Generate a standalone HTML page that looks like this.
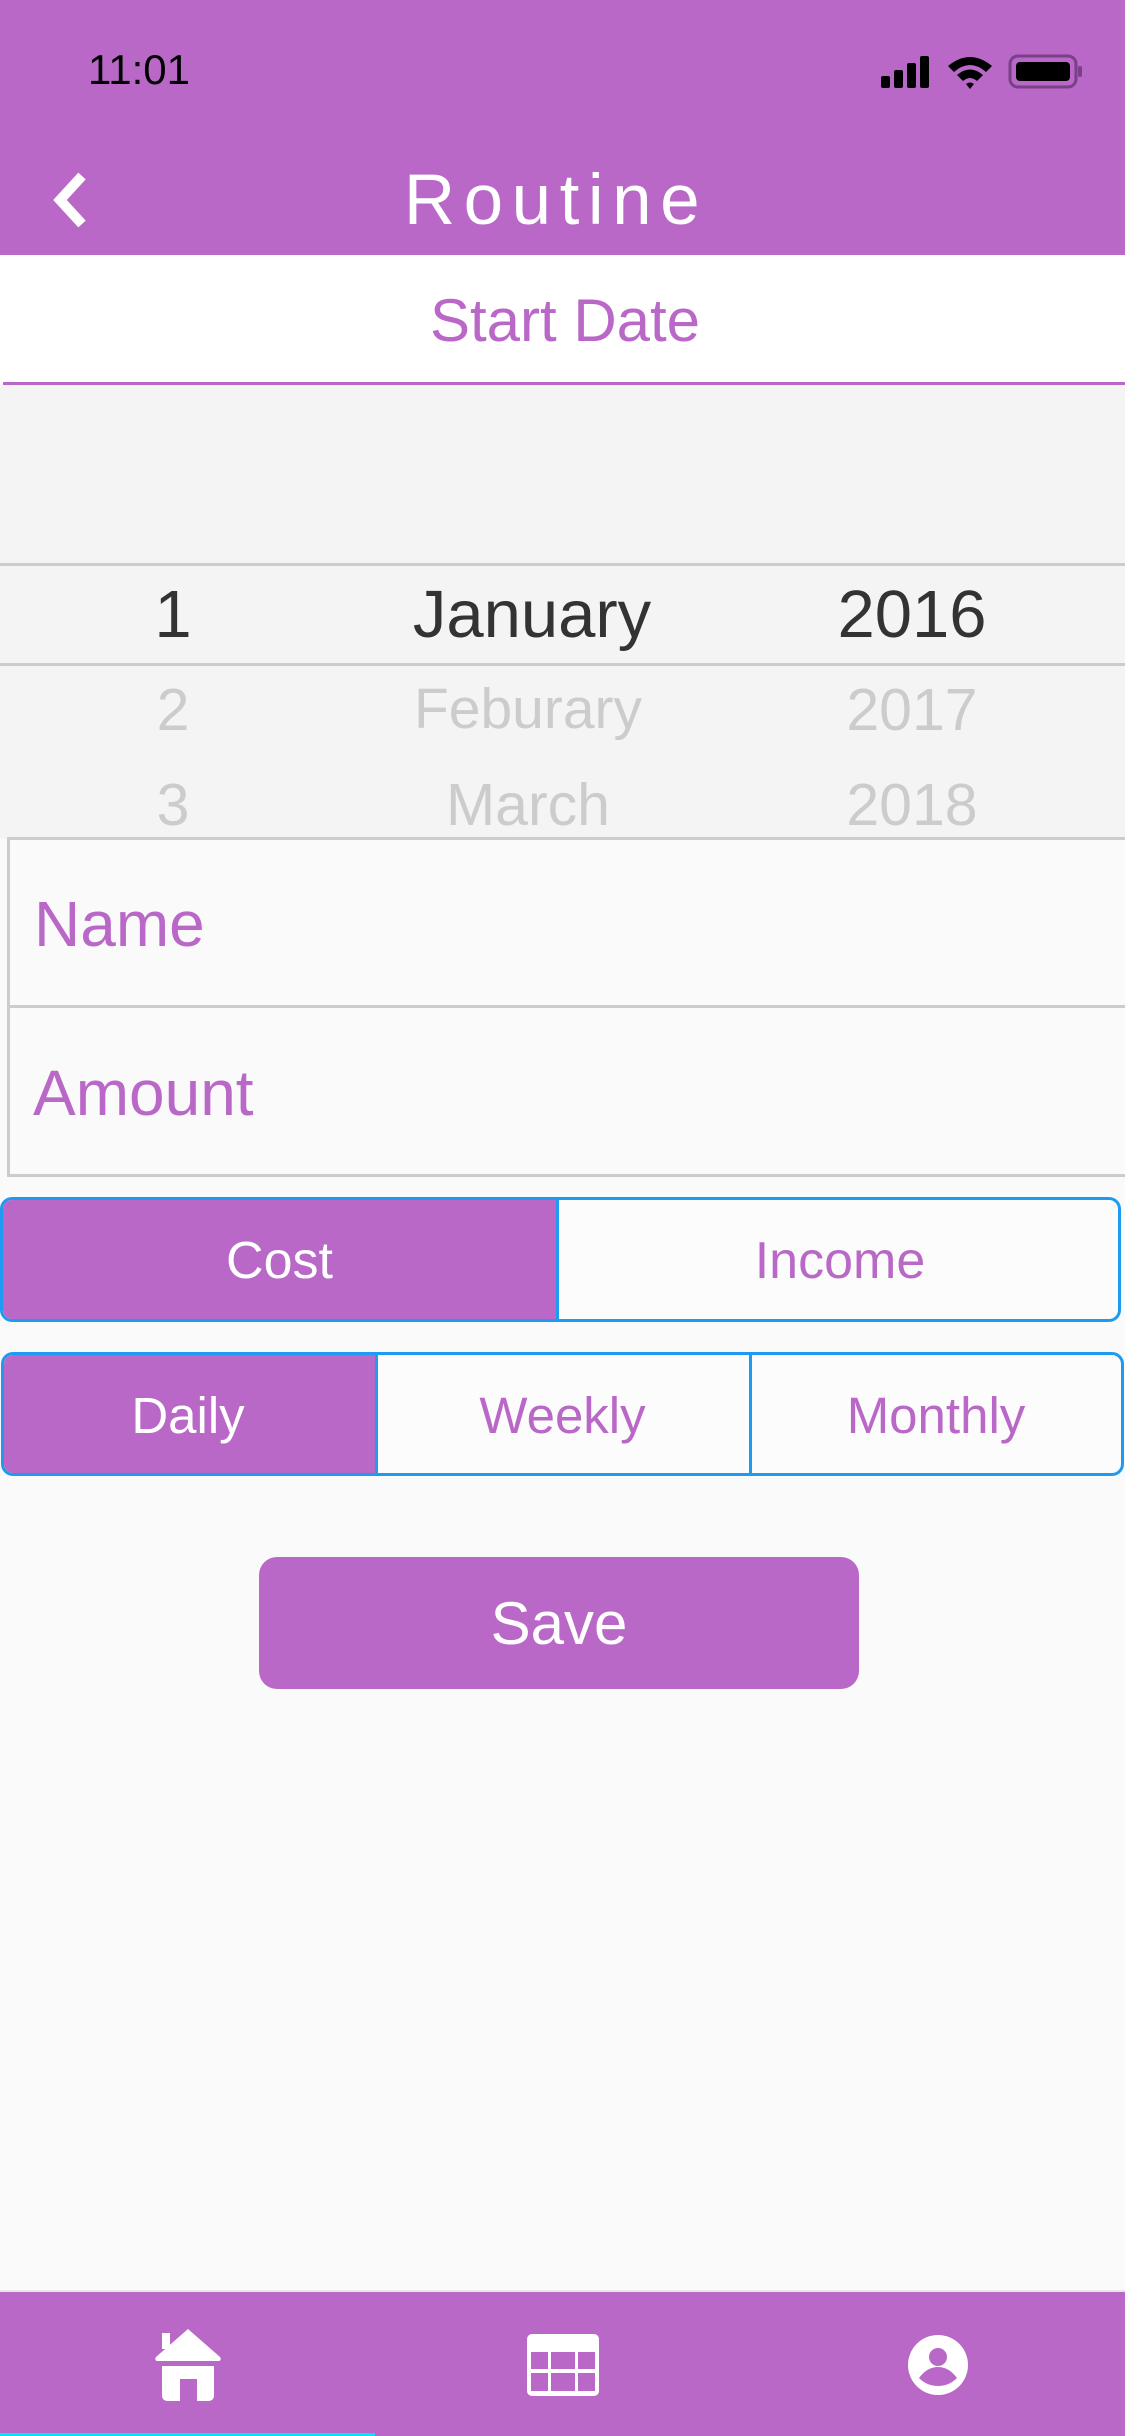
<!DOCTYPE html>
<html><head><meta charset="utf-8"><style>
*{margin:0;padding:0;box-sizing:border-box}
body{width:1125px;height:2436px;background:#fafafa;position:relative;overflow:hidden;font-family:"Liberation Sans",Arial,sans-serif}
.a{position:absolute;line-height:1;white-space:nowrap}
.c{text-align:center}
.p{color:#b968c7}
.g{color:#cccccc}
</style></head><body>
<div class="a" style="left:0;top:0;width:1125px;height:255px;background:#b968c7"></div>
<div class="a" style="left:88px;top:49px;font-size:42px;color:#000">11:01</div>
<svg class="a" style="left:878px;top:52px" width="210" height="40" viewBox="0 0 210 40">
<rect x="3" y="24" width="9" height="12" rx="2" fill="#000"/>
<rect x="16" y="18" width="9" height="18" rx="2" fill="#000"/>
<rect x="29" y="11" width="9" height="25" rx="2" fill="#000"/>
<rect x="42" y="4" width="9" height="32" rx="2" fill="#000"/>
<path d="M70 14 Q92 -4 114 14 L108 20 Q92 6 76 20 Z" fill="#000"/>
<path d="M79 23 Q92 12 105 23 L99 29 Q92 23 85 29 Z" fill="#000"/>
<path d="M88 32 L92 37 L96 32 Q92 29 88 32Z" fill="#000"/>
<rect x="132" y="4" width="66" height="31" rx="8" fill="none" stroke="#7a3f87" stroke-width="3"/>
<rect x="138" y="10" width="54" height="19" rx="4" fill="#000"/>
<rect x="200" y="14" width="4" height="11" rx="2" fill="#7a3f87"/>
</svg>
<svg class="a" style="left:46px;top:170px" width="44" height="60" viewBox="0 0 44 60"><path d="M36 6 L14 30 L36 54" fill="none" stroke="#fff" stroke-width="10"/></svg>
<div class="a c" style="left:0;width:1112px;top:165px;font-size:71px;color:#fff;letter-spacing:8.5px">Routine</div>
<div class="a" style="left:0;top:255px;width:1125px;height:129px;background:#fff"></div>
<div class="a c p" style="left:0;width:1130px;top:291px;font-size:60px">Start Date</div>
<div class="a" style="left:3px;top:382px;width:1122px;height:3px;background:#b968c7"></div>
<div class="a" style="left:0;top:385px;width:1125px;height:453px;background:#f4f4f4"></div>
<div class="a" style="left:0;top:563px;width:1125px;height:3px;background:#cccccc"></div>
<div class="a" style="left:0;top:663px;width:1125px;height:3px;background:#cccccc"></div>
<div class="a c" style="left:123px;width:100px;top:581px;font-size:67px;color:#333">1</div>
<div class="a c" style="left:332px;width:400px;top:581px;font-size:67px;color:#333">January</div>
<div class="a c" style="left:762px;width:300px;top:581px;font-size:67px;color:#333">2016</div>
<div class="a c g" style="left:123px;width:100px;top:681px;font-size:59px">2</div>
<div class="a c g" style="left:328px;width:400px;top:681px;font-size:57px">Feburary</div>
<div class="a c g" style="left:762px;width:300px;top:681px;font-size:59px">2017</div>
<div class="a c g" style="left:123px;width:100px;top:776px;font-size:59px">3</div>
<div class="a c g" style="left:328px;width:400px;top:776px;font-size:59px">March</div>
<div class="a c g" style="left:762px;width:300px;top:776px;font-size:59px">2018</div>
<div class="a" style="left:7px;top:837px;width:1125px;height:340px;border:3px solid #cccccc;border-right:none;background:#fafafa"></div>
<div class="a" style="left:7px;top:1005px;width:1118px;height:3px;background:#cccccc"></div>
<div class="a p" style="left:34px;top:892px;font-size:64px">Name</div>
<div class="a p" style="left:33px;top:1061px;font-size:64px">Amount</div>
<div class="a" style="left:0;top:1197px;width:1121px;height:125px;border:3px solid #1e9bf0;border-radius:12px;background:#fcfcfc;overflow:hidden">
<div class="a" style="left:0;top:0;width:556px;height:119px;background:#b968c7;border-right:3px solid #1e9bf0"></div></div>
<div class="a c" style="left:0;width:559px;top:1235px;font-size:52px;color:#fff">Cost</div>
<div class="a c p" style="left:559px;width:562px;top:1235px;font-size:52px">Income</div>
<div class="a" style="left:1px;top:1352px;width:1123px;height:124px;border:3px solid #1e9bf0;border-radius:12px;background:#fcfcfc;overflow:hidden">
<div class="a" style="left:0;top:0;width:374px;height:118px;background:#b968c7;border-right:3px solid #1e9bf0"></div>
<div class="a" style="left:745px;top:0;width:3px;height:118px;background:#1e9bf0"></div></div>
<div class="a c" style="left:0;width:376px;top:1390px;font-size:51px;color:#fff">Daily</div>
<div class="a c p" style="left:376px;width:373px;top:1390px;font-size:51px">Weekly</div>
<div class="a c p" style="left:749px;width:374px;top:1390px;font-size:51px">Monthly</div>
<div class="a" style="left:259px;top:1557px;width:600px;height:132px;background:#b968c7;border-radius:18px"></div>
<div class="a c" style="left:259px;width:600px;top:1594px;font-size:60px;color:#fff">Save</div>
<div class="a" style="left:0;top:2290px;width:1125px;height:3px;background:#e6e6e6"></div>
<div class="a" style="left:0;top:2292px;width:1125px;height:144px;background:#b968c7"></div>
<svg class="a" style="left:152px;top:2327px" width="72" height="76" viewBox="0 0 72 76">
<path d="M4 30 L36 2 L68 30 Q70 34 66 34 L6 34 Q2 34 4 30Z" fill="#fff"/>
<rect x="10" y="6" width="8" height="16" fill="#fff"/>
<path d="M10 39 L62 39 L62 68 Q62 74 56 74 L45 74 L45 52 L28 52 L28 74 L16 74 Q10 74 10 68Z" fill="#fff"/>
</svg>
<svg class="a" style="left:527px;top:2334px" width="72" height="62" viewBox="0 0 72 62">
<rect x="0" y="0" width="72" height="62" rx="5" fill="#fff"/>
<g fill="#b968c7"><rect x="4" y="18" width="17" height="17"/><rect x="24" y="18" width="24" height="17"/><rect x="51" y="18" width="17" height="17"/>
<rect x="4" y="39" width="17" height="18"/><rect x="24" y="39" width="24" height="18"/><rect x="51" y="39" width="17" height="18"/></g>
</svg>
<svg class="a" style="left:907px;top:2334px" width="62" height="62" viewBox="0 0 62 62">
<circle cx="31" cy="31" r="30" fill="#fff"/>
<ellipse cx="31" cy="23" rx="9" ry="9" fill="#b968c7"/>
<path d="M12 44 Q20 33 31 33 Q42 33 50 44 Q42 52 31 52 Q20 52 12 44Z" fill="#b968c7"/>
</svg>
<div class="a" style="left:0;top:2433px;width:375px;height:3px;background:#00e5ff"></div>
</body></html>
